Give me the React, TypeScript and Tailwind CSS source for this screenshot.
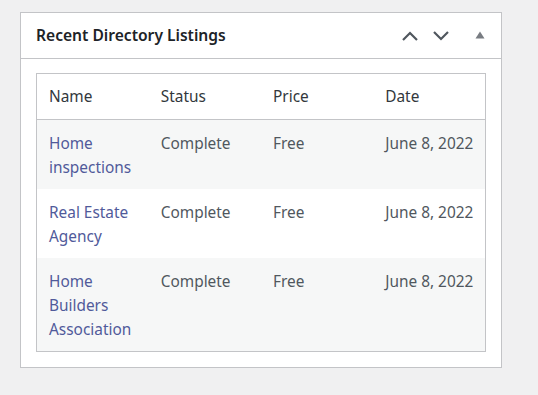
import React from "react";

const listings = [
  { name: "Home inspections", status: "Complete", price: "Free", date: "June 8, 2022" },
  { name: "Real Estate Agency", status: "Complete", price: "Free", date: "June 8, 2022" },
  { name: "Home Builders Association", status: "Complete", price: "Free", date: "June 8, 2022" },
];

const App = () => {
  return (
    <div
      className="w-[538px] h-[395px] bg-[#f0f0f1] pt-3 pl-5"
      style={{ fontFamily: '"Noto Sans", "Open Sans", sans-serif' }}
    >
      <div className="w-[482px] bg-white border border-[#c3c4c7]">
        {/* Heading */}
        <div className="h-[46px] flex items-center justify-between border-b border-[#c3c4c7] pl-[15px] pr-[16px]">
          <h2 className="text-[15.6px] font-semibold text-[#1d2327]">Recent Directory Listings</h2>
          <div className="flex items-center text-[#50575e]">
            <svg width="18" height="12" viewBox="0 0 18 12" className="mr-[13px]">
              <path d="M2 10 L9 3 L16 10" fill="none" stroke="currentColor" strokeWidth="2.2" />
            </svg>
            <svg width="18" height="12" viewBox="0 0 18 12" className="mr-[25px]">
              <path d="M2 2 L9 9 L16 2" fill="none" stroke="currentColor" strokeWidth="2.2" />
            </svg>
            <svg width="10" height="8" viewBox="0 0 10 8" className="text-[#787c82] -mt-[1px]">
              <path d="M0.5 7.5 L5 0.5 L9.5 7.5 Z" fill="currentColor" />
            </svg>
          </div>
        </div>

        {/* Table */}
        <div className="px-[15px] pt-[14px] pb-[15px]">
          <table className="w-full table-fixed border border-[#c3c4c7] border-collapse text-[15.4px] leading-6">
            <thead>
              <tr className="border-b border-[#c3c4c7]">
                <th className="text-left font-normal text-[#32373c] pl-[12px] pt-[11px] pb-[10px]">Name</th>
                <th className="text-left font-normal text-[#32373c] pl-[12px] pt-[11px] pb-[10px]">Status</th>
                <th className="text-left font-normal text-[#32373c] pl-[12px] pt-[11px] pb-[10px]">Price</th>
                <th className="text-left font-normal text-[#32373c] pl-[12px] pt-[11px] pb-[10px]">Date</th>
              </tr>
            </thead>
            <tbody>
              {listings.map((row, i) => (
                <tr key={row.name} className={i % 2 === 0 ? "bg-[#f6f7f7]" : "bg-white"}>
                  <td className="align-top pl-[12px] pr-2 pt-3 pb-[9px]">
                    <a href="#" className="text-[#505a9a]">{row.name}</a>
                  </td>
                  <td className="align-top pl-[12px] pt-3 pb-[9px] text-[#50575e]">{row.status}</td>
                  <td className="align-top pl-[12px] pt-3 pb-[9px] text-[#50575e]">{row.price}</td>
                  <td className="align-top pl-[12px] pt-3 pb-[9px] text-[#50575e] whitespace-nowrap">{row.date}</td>
                </tr>
              ))}
            </tbody>
          </table>
        </div>
      </div>
    </div>
  );
};

export default App;
